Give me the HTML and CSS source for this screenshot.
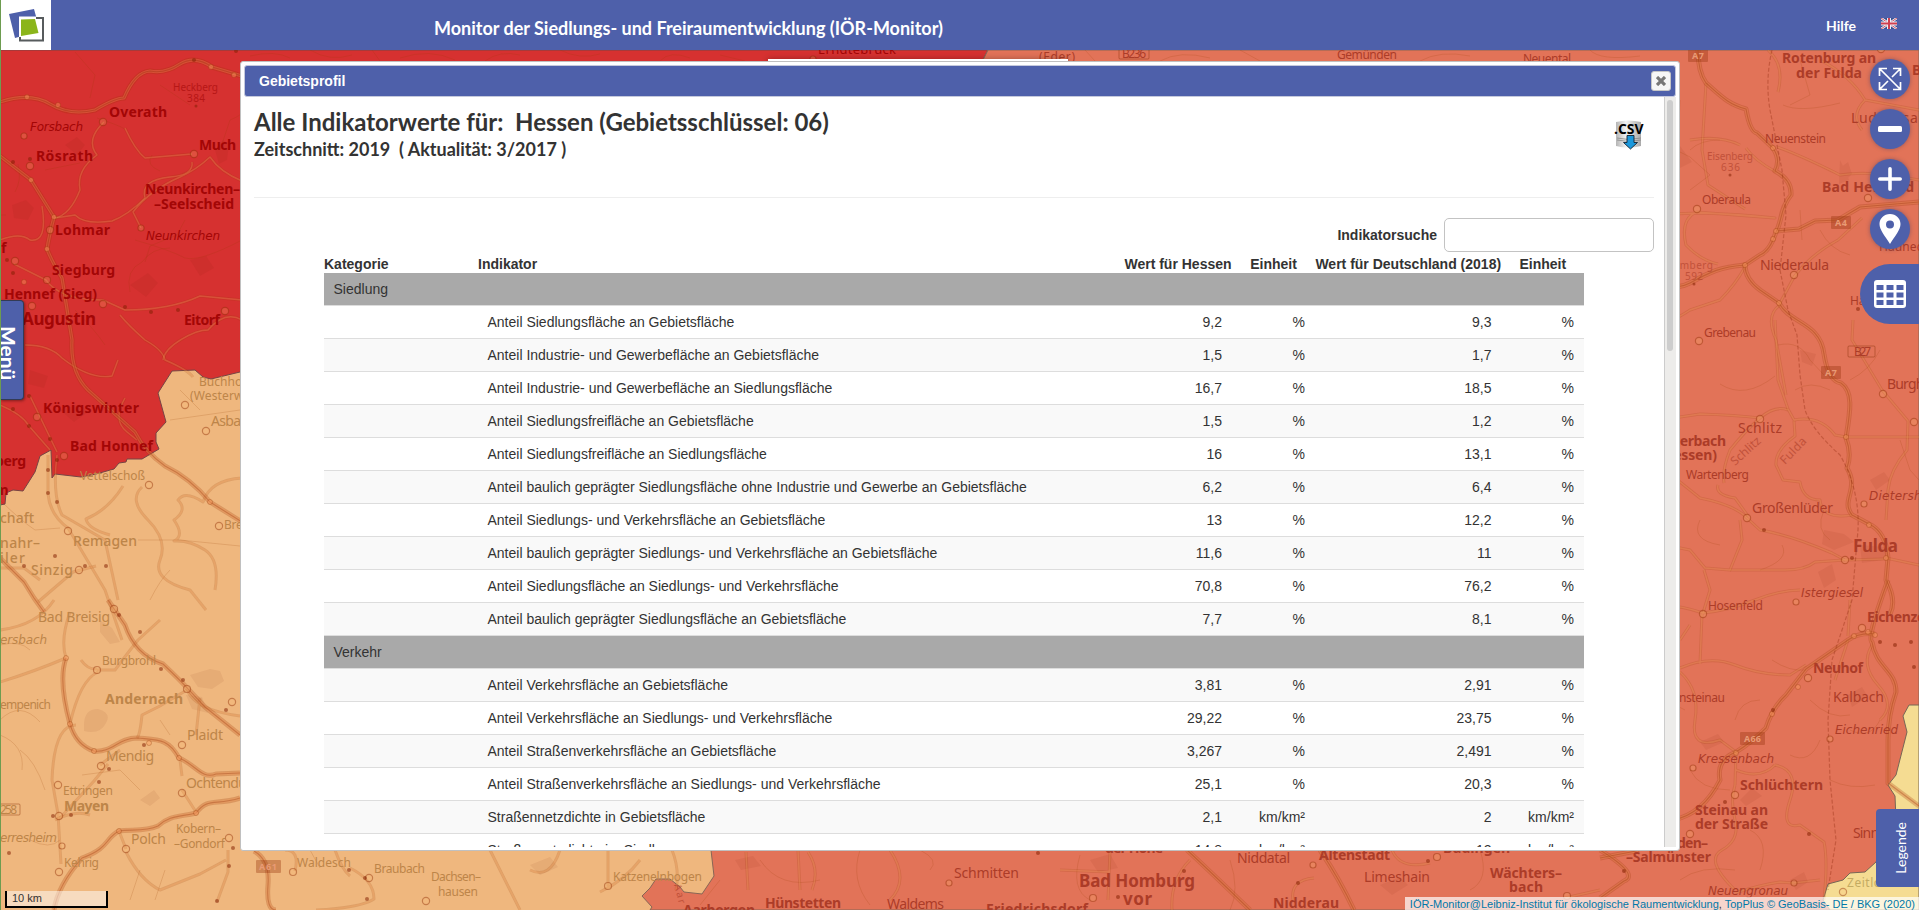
FILE: index.html
```html
<!DOCTYPE html>
<html lang="de">
<head>
<meta charset="utf-8">
<title>IÖR-Monitor</title>
<link rel="stylesheet" href="styles.css">
</head>
<body>
<div class="app">
<svg class="map" viewBox="0 0 1919 910" width="1919" height="910" aria-hidden="true">
  <defs>
    <g id="motorways">
      <path d="M0 102 Q30 92 50 104 T95 110 Q115 98 124 98 Q135 72 150 71 Q165 74 180 64 Q195 55 212 67 L242 76"/>
      <path d="M0 156 L31 180 L54 217 Q49 236 47 249 Q52 262 62 278 L72 340 Q70 372 88 390 L135 432 Q145 452 165 466 Q190 478 210 502 L242 522"/>
      <path d="M0 558 L24 582 L34 598 L44 612"/>
      <path d="M108 600 L125 625 Q135 655 163 664 Q180 680 190 691 L205 707 L240 735"/>
      <path d="M66 658 Q58 680 70 724 Q76 745 94 751 C112 753 118 738 137 738 C158 740 168 738 179 758 C195 764 202 780 216 774 L240 773"/>
      <path d="M240 798 C215 806 208 797 196 813 C180 817 170 815 158 826 C145 832 130 829 119 831 C105 838 110 848 82 858 Q58 885 54 910"/>
      <path d="M254 851 Q270 860 268 885 T276 910"/>
      <path d="M1698 50 Q1698 72 1706 83 C1722 97 1728 104 1746 109 Q1750 132 1757 133 L1773 148 Q1781 160 1775 171 Q1792 180 1791 195 C1780 208 1782 222 1776 232 Q1770 251 1760 255 L1745 265 Q1745 279 1760 290 L1779 303 C1790 324 1820 322 1824 354 Q1828 381 1841 383 C1854 392 1850 412 1846 438 Q1852 454 1847 468 C1860 490 1840 500 1852 515 L1869 524 Q1886 532 1888 558 L1886 580 Q1897 600 1890 614"/>
      <path d="M1776 231 L1799 229 L1815 221 L1838 220 L1860 207 L1919 202"/>
      <path d="M1640 288 C1660 285 1675 291 1690 283 C1710 272 1720 267 1745 265"/>
      <path d="M1600 858 L1636 851 L1673 820 Q1703 814 1720 780 Q1716 760 1736 752 Q1752 742 1766 728 Q1772 708 1786 695 L1806 669 L1848 640 Q1860 632 1875 634"/>
      <path d="M1888 580 Q1866 640 1872 642 C1876 668 1896 670 1896 692 Q1888 715 1888 740 L1888 783 L1919 806"/>
      <path d="M1600 850 Q1640 875 1624 881 L1600 898"/>
      <path d="M1320 850 Q1340 880 1354 910"/>
      <path d="M1187 850 Q1215 876 1250 910"/>
    </g>
    <g id="roads">
      <path d="M104 122 Q85 140 97 155 Q76 170 80 190 Q70 215 55 218"/>
      <path d="M125 128 Q135 150 145 158 Q180 155 192 154 M192 162 Q194 175 170 177 Q140 180 145 198 Q128 215 112 221 Q85 225 75 215 L55 218"/>
      <path d="M141 228 L133 212 Q150 190 180 177 Q196 170 210 157 Q220 172 242 181"/>
      <path d="M0 240 Q20 232 30 240 Q48 243 42 206"/>
      <path d="M14 264 L46 280 Q60 300 103 300 L125 310 Q170 310 200 296 L242 300"/>
      <path d="M120 315 Q128 325 145 340 Q163 350 165 360 Q188 370 193 377"/>
      <path d="M163 360 C165 345 195 330 208 330 Q225 310 242 320"/>
      <path d="M25 345 Q50 345 62 358 Q90 380 112 376 L118 360"/>
      <path d="M0 405 Q22 414 29 426 L50 450 M30 396 L57 452 M125 398 Q112 420 127 432 L137 440"/>
      <path d="M48 455 L48 494 Q50 515 68 528 L80 548 L105 590 L122 640 M57 455 Q52 495 62 515 L105 540 L118 600"/>
      <path d="M123 486 Q108 510 86 519 Q88 529 110 535"/>
      <path d="M142 487 Q128 500 148 520 T160 560 T190 590 L206 610"/>
      <path d="M242 478 Q210 480 203 502 Q185 490 178 500 Q188 510 174 520 Q185 536 174 541 Q190 540 205 550 T215 590"/>
      <path d="M38 602 L73 572 L96 566 M0 568 H24 L40 580"/>
      <path d="M0 630 Q38 625 54 600 M66 658 Q60 640 70 612 M66 658 Q33 672 0 682 M97 669 Q88 670 81 660"/>
      <path d="M97 670 H115 Q130 650 138 640 L160 620 M98 672 Q80 680 70 724"/>
      <path d="M187 690 Q170 700 160 706 L142 715 Q140 735 137 738 M200 698 L196 735 M187 690 Q195 710 240 716"/>
      <path d="M76 725 Q54 725 52 780 L58 814 L61 864 M108 764 L94 781 L60 818 M100 765 L120 750"/>
      <path d="M55 820 Q75 810 90 815 M119 831 L126 849 M182 790 L196 812 M182 776 L180 760"/>
      <path d="M228 850 L228 872 L217 902 M126 852 Q140 880 160 890 L200 874 L226 860"/>
      <path d="M335 850 Q342 870 350 876 M350 868 Q374 880 374 899 Q360 908 316 910 M295 871 Q300 850 285 850"/>
      <path d="M490 850 L510 890 L520 910 M530 870 Q550 880 560 850 M600 892 Q625 880 640 860 M608 850 L608 886"/>
      <path d="M672 850 Q680 870 676 890 M746 852 L748 890 M798 850 L800 890 M808 852 Q820 870 812 890 M890 850 Q910 880 890 900"/>
      <path d="M1060 870 L1110 872 M1110 852 L1108 900 M1190 860 Q1170 880 1172 910 M1314 878 Q1290 880 1293 900 M1565 898 L1600 890 M1430 863 Q1400 870 1392 850"/>
      <path d="M1746 148 Q1754 160 1776 172 M1740 145 Q1720 135 1690 140 M1777 147 Q1800 155 1840 175 Q1870 170 1919 180"/>
      <path d="M1778 92 Q1785 65 1768 50 M1706 83 L1702 150 L1708 185 L1745 209"/>
      <path d="M1696 212 L1775 218 Q1740 214 1700 213 L1640 215 M1696 212 Q1680 220 1686 245 Q1700 260 1718 264"/>
      <path d="M1745 267 Q1735 285 1720 300 L1690 310 Q1660 330 1640 326"/>
      <path d="M1794 277 Q1810 255 1838 240 L1862 218 M1794 277 L1780 303 M1780 305 Q1765 315 1776 340 L1786 395"/>
      <path d="M1820 60 Q1850 75 1865 100 L1919 110 M1865 100 Q1850 115 1862 130"/>
      <path d="M1853 320 L1852 340 L1882 390 L1908 421 L1907 450 Q1890 470 1888 490 L1886 520"/>
      <path d="M1775 320 L1778 380 L1788 409 L1794 420 Q1820 415 1835 435 L1846 437 H1919"/>
      <path d="M1760 418 Q1735 415 1700 414 L1680 417 L1640 440 M1788 410 Q1775 405 1760 418 T1730 450 Q1722 470 1724 483"/>
      <path d="M1794 421 L1795 436 Q1775 450 1776 465 L1783 480 L1800 482 Q1803 500 1820 500 Q1822 520 1852 515"/>
      <path d="M1640 450 L1700 498 Q1735 505 1747 518 L1760 530 Q1790 535 1832 553 L1845 560 L1885 559"/>
      <path d="M1718 485 Q1715 495 1735 498 L1748 516 M1740 520 L1742 540 L1730 570 L1705 568 L1690 550 L1640 540"/>
      <path d="M1730 570 L1785 570 Q1805 570 1815 562 L1845 560 M1704 570 L1710 590 L1703 613"/>
      <path d="M1703 613 Q1730 610 1755 600 T1800 590 M1703 613 Q1665 600 1640 610 M1886 558 L1919 565"/>
      <path d="M1702 614 L1700 664 M1680 668 Q1710 655 1735 665 T1790 675 L1806 665"/>
      <path d="M1680 672 Q1700 690 1695 720 T1720 740 L1736 752 M1680 640 L1690 625"/>
      <path d="M1736 752 L1735 785 M1736 770 Q1760 780 1775 765 M1735 785 Q1730 800 1735 820 T1722 850 T1735 890"/>
      <path d="M1775 765 Q1800 770 1790 800 T1800 825 L1824 842 Q1828 860 1824 900"/>
      <path d="M1848 640 L1835 680 M1872 645 Q1860 665 1878 685 T1880 720 M1848 636 L1850 600"/>
      <path d="M1735 893 Q1760 885 1780 882 L1793 883 L1820 880"/>
    </g>
    <g id="tracks">
      <path d="M15 192 Q22 180 18 164 M45 170 L80 163 M97 118 Q118 125 125 129 M152 155 Q145 165 160 171 M185 220 L177 235 L150 246 L145 262 M220 150 L230 120 Q242 115 242 112 M75 52 L95 75 L90 98 M160 85 L190 105 M135 240 Q170 250 185 258 Q200 262 242 240"/>
      <path d="M250 56 Q275 50 290 58 M310 50 Q330 62 352 55 M372 50 L380 61 M400 58 Q430 48 455 60 M485 61 Q500 50 520 55 M560 50 Q580 60 600 54 M660 61 Q670 50 690 58 M720 55 L745 61 M1085 50 L1095 61 M1160 61 Q1180 50 1210 58 M1240 50 L1260 61 M1420 61 Q1440 50 1470 56 M1590 50 Q1600 61 1640 56"/>
      <path d="M130 292 Q125 270 142 262 Q152 248 170 248 M75 310 Q95 330 105 345 M0 215 H6 M180 390 Q190 400 200 410 M170 420 L240 410 M0 500 Q20 520 35 530 L60 528 M0 645 Q20 640 30 650 M0 720 Q20 700 40 722 M20 750 Q35 760 45 790 M82 775 L120 770 L140 790 M160 720 L170 735"/>
      <path d="M138 540 H180 L240 546 M150 600 Q160 580 170 570 M0 735 Q25 745 22 770 M30 840 Q50 850 60 840 M155 900 L165 870 M140 870 L130 900 M310 850 L320 868"/>
      <path d="M1650 80 L1680 100 L1678 150 M1690 150 Q1700 140 1720 140 M1783 105 Q1800 113 1840 103 M1640 155 L1670 147 L1690 157 L1710 175 L1690 190 M1680 185 L1640 205 M1800 60 L1810 95 L1790 105 M1640 230 Q1660 240 1680 225 M1800 210 L1802 240 M1820 230 Q1830 250 1850 255"/>
      <path d="M1720 384 Q1745 400 1775 376 M1778 345 Q1800 340 1810 360 L1824 375 M1640 400 Q1670 410 1680 430 M1795 390 Q1810 380 1830 390 M1850 380 Q1870 370 1880 350 M1700 520 Q1690 540 1720 545 M1640 590 Q1660 570 1680 580 M1782 545 Q1790 560 1760 570 M1824 510 Q1815 530 1830 540 M1900 440 L1910 470 L1919 480"/>
      <path d="M1772 660 Q1790 672 1806 670 M1640 700 Q1660 695 1685 710 M1760 700 Q1740 700 1735 720 M1810 700 Q1830 720 1850 715 M1790 755 Q1810 765 1820 740 M1850 730 Q1870 740 1880 720 M1690 770 Q1700 790 1730 790 M1750 830 Q1770 840 1760 870 M1830 780 Q1850 790 1875 785 M1680 880 Q1700 865 1735 870"/>
      <path d="M700 905 L720 880 M760 860 Q780 890 820 880 M860 850 Q850 880 870 905 M930 870 Q940 860 920 850 M1080 855 Q1070 890 1090 900 M1230 860 Q1240 890 1230 910 M1480 850 Q1490 880 1470 890"/>
    </g>
    <path id="patches" d="M215 150 l8 -10 6 4 -2 16 -8 4z M130 285 l18 -12 10 10 -12 14z M65 145 l12 -8 8 8 -8 10z M190 260 l16 -4 8 12 -14 8z M12 205 l14 -5 8 8 -6 12 -14 -2z M60 410 l20 -6 8 8 -14 10z M30 370 l18 6 -4 12 -16 -4z M190 675 l20 -6 10 2 4 10 -12 8 -14 -2z M186 695 l16 2 6 16 -16 -4z M140 800 l14 -10 6 8 -10 8z M84 725 q0 -16 14 -16 q14 4 8 14 q-6 12 -22 8z M100 620 l12 8 8 14 -10 2 -10 -12z M1840 168 l8 -6 4 12 -8 8z M1650 150 l30 -4 12 16 -20 10 -24 -6z M1824 530 l20 4 10 8 -20 8 -12 -6z M1860 545 l24 2 6 12 -28 4z M1818 572 l14 -8 4 16 -12 8z M1870 480 l14 -8 6 8 -14 10z M1800 350 l16 4 -4 12 -10 -4z M1848 695 l14 -8 6 10 -16 10z M1700 742 l18 -8 6 8 -18 8z M1740 800 l12 -12 10 8 -16 10z M1790 880 l14 -8 4 10 -12 8z M1840 160 l5 10 4 10 -10 4z M735 860 l18 -4 8 10 -20 4z M1380 885 l20 -8 8 8 -16 10z M530 865 l20 -8 8 10 -18 8z M1090 860 l20 -6 8 14 -20 4z"/>
    <path id="redArea" d="M0 50H988L978 70L500 300L240 372L211 379 203 377 195 370 172 371 158 393 166 422 156 433 156 442 159 449 142 459 127 459 126 462 119 463 114 469 96 474 81 477 55 474 52 478 51 450 40 456 35 472 23 491 13 490 6 493 5 504 0 505Z"/>
    <path id="coralArea" d="M988 50H1919V910H650L652 907 642 896 650 888 656 879 670 879 680 887 684 892 702 894 714 876 711 850 700 500 978 70Z"/>
  </defs>
  <rect class="land-tan" width="1919" height="910"/>
  <use href="#redArea" class="land-red"/>
  <use href="#coralArea" class="land-coral"/>
  <path class="land-yellow" d="M1919 705H1909L1903 716 1907 732 1896 775 1888 785 1895 796 1896 820 1876 862 1865 872 1850 873 1843 880 1828 884 1823 900 1830 910H1919Z"/>
  <use href="#patches" class="patches"/>
  <use href="#tracks" class="tracks"/>
  <use href="#roads" class="roads-casing"/><use href="#roads" class="roads-core"/>
  <use href="#motorways" class="mw-casing"/><use href="#motorways" class="mw-core"/><use href="#motorways" class="mw-mid"/>
  <path class="rail" d="M1772 50 Q1765 80 1770 110 L1782 170 L1786 215 L1780 270 L1788 310 L1797 335 L1800 375 L1805 410 Q1812 430 1840 455 Q1860 490 1858 530 L1852 600 L1832 660 L1828 720 L1830 780 L1836 840 L1828 890"/>

  <g class="junctions">
    <circle cx="27" cy="97" r="2.5"/><circle cx="58" cy="105" r="2.5"/><circle cx="31" cy="180" r="2.5"/><circle cx="54" cy="217" r="2.5"/><circle cx="47" cy="249" r="2.5"/><circle cx="24" cy="282" r="2.5"/><circle cx="211" cy="67" r="2.5"/><circle cx="234" cy="75" r="2.5"/><circle cx="210" cy="502" r="2.5"/><circle cx="66" cy="658" r="2.5"/><circle cx="70" cy="724" r="2.5"/><circle cx="94" cy="751" r="2.5"/><circle cx="149" cy="743" r="2.5"/><circle cx="179" cy="758" r="2.5"/><circle cx="196" cy="813" r="2.5"/><circle cx="119" cy="831" r="2.5"/><circle cx="33" cy="899" r="2.5"/><circle cx="1773" cy="148" r="2.5"/><circle cx="1776" cy="231" r="2.5"/><circle cx="1773" cy="239" r="2.5"/><circle cx="1745" cy="265" r="2.5"/><circle cx="1779" cy="303" r="2.5"/><circle cx="1846" cy="437" r="2.5"/><circle cx="1869" cy="525" r="2.5"/><circle cx="1886" cy="558" r="2.5"/><circle cx="1736" cy="753" r="2.5"/><circle cx="1772" cy="714" r="2.5"/><circle cx="1798" cy="687" r="2.5"/><circle cx="1854" cy="636" r="2.5"/><circle cx="1868" cy="632" r="2.5"/><circle cx="1875" cy="635" r="2.5"/>
  </g>
  <g class="places">
    <circle cx="103" cy="122" r="3.600"/><circle cx="24" cy="136" r="3"/><circle cx="30" cy="166" r="3.600"/><circle cx="194" cy="154" r="3.600"/><circle cx="50" cy="230" r="3.600"/><circle cx="141" cy="228" r="3"/><circle cx="15" cy="261" r="3.600"/><circle cx="47" cy="280" r="3.500"/><circle cx="32" cy="306" r="3.600"/><circle cx="103" cy="304" r="3.600"/><circle cx="225" cy="311" r="3.600"/><circle cx="37" cy="417" r="3.600"/><circle cx="64" cy="456" r="3.600"/><circle cx="185" cy="405" r="3.600"/><circle cx="206" cy="431" r="3.600"/><circle cx="149" cy="485" r="3.600"/><circle cx="68" cy="531" r="3.600"/><circle cx="219" cy="526" r="3.600"/><circle cx="79" cy="570" r="3.600"/><circle cx="114" cy="609" r="3.600"/><circle cx="97" cy="670" r="3.500"/><circle cx="187" cy="689" r="3.500"/><circle cx="232" cy="702" r="3.600"/><circle cx="182" cy="745" r="3.600"/><circle cx="101" cy="766" r="3.600"/><circle cx="58" cy="785" r="3.600"/><circle cx="182" cy="793" r="3.600"/><circle cx="59" cy="816" r="3.600"/><circle cx="62" cy="846" r="3"/><circle cx="126" cy="849" r="3.600"/><circle cx="59" cy="872" r="3.600"/><circle cx="229" cy="838" r="3.600"/><circle cx="293" cy="872" r="3.500"/><circle cx="369" cy="878" r="3.600"/><circle cx="426" cy="901" r="3.600"/><circle cx="608" cy="886" r="3.500"/><circle cx="813" cy="59" r="3"/><circle cx="949" cy="883" r="3"/><circle cx="1093" cy="898" r="3.500"/><circle cx="1313" cy="865" r="3"/><circle cx="1437" cy="857" r="3.500"/><circle cx="1567" cy="896" r="3.500"/>
    <circle cx="1881" cy="49" r="3.600"/><circle cx="1697" cy="209" r="3.600"/><circle cx="1868" cy="198" r="3.600"/><circle cx="1794" cy="275" r="3.600"/><circle cx="1699" cy="341" r="3.600"/><circle cx="1883" cy="394" r="3.600"/><circle cx="1914" cy="422" r="3.600"/><circle cx="1760" cy="419" r="3.600"/><circle cx="1747" cy="518" r="3.600"/><circle cx="1864" cy="504" r="3"/><circle cx="1845" cy="560" r="3.600"/><circle cx="1796" cy="602" r="3"/><circle cx="1703" cy="614" r="3.600"/><circle cx="1862" cy="628" r="3.600"/><circle cx="1808" cy="678" r="3.600"/><circle cx="1830" cy="739" r="3"/><circle cx="1693" cy="768" r="3"/><circle cx="1735" cy="795" r="3.600"/><circle cx="1690" cy="834" r="3.600"/><circle cx="1794" cy="883" r="3"/><circle cx="1843" cy="892" r="3.600"/>
  </g>
  <g class="dots">
    <circle cx="194" cy="60" r="2"/><circle cx="236" cy="51" r="2"/><circle cx="196" cy="106" r="1.5"/><circle cx="13" cy="162" r="2"/><circle cx="30" cy="159" r="2"/><circle cx="7" cy="260" r="2"/><circle cx="13" cy="273" r="2"/><circle cx="125" cy="307" r="2"/><circle cx="151" cy="312" r="2"/><circle cx="178" cy="310" r="2"/><circle cx="29" cy="396" r="2"/><circle cx="13" cy="409" r="2"/><circle cx="29" cy="426" r="2"/><circle cx="50" cy="439" r="2"/><circle cx="57" cy="460" r="2"/><circle cx="48" cy="470" r="2"/><circle cx="48" cy="493" r="2"/><circle cx="57" cy="502" r="2"/><circle cx="55" cy="556" r="2"/><circle cx="24" cy="566" r="2"/><circle cx="85" cy="566" r="2"/><circle cx="106" cy="566" r="2"/><circle cx="119" cy="615" r="2"/><circle cx="140" cy="632" r="2"/><circle cx="161" cy="669" r="2"/><circle cx="183" cy="680" r="2"/><circle cx="226" cy="710" r="2"/><circle cx="144" cy="745" r="2"/><circle cx="109" cy="769" r="2"/><circle cx="99" cy="782" r="2"/><circle cx="53" cy="816" r="2"/><circle cx="71" cy="815" r="2"/><circle cx="9" cy="853" r="2"/><circle cx="233" cy="848" r="2"/><circle cx="229" cy="866" r="2"/><circle cx="217" cy="901" r="2"/><circle cx="349" cy="870" r="2"/><circle cx="365" cy="878" r="2"/><circle cx="367" cy="899" r="2"/><circle cx="1038" cy="853" r="2"/><circle cx="1118" cy="897" r="2"/><circle cx="1184" cy="871" r="2"/><circle cx="1298" cy="883" r="2"/><circle cx="1428" cy="861" r="2"/><circle cx="1624" cy="871" r="2"/><circle cx="1730" cy="175" r="1.5"/><circle cx="1694" cy="284" r="1.5"/><circle cx="1858" cy="309" r="2"/><circle cx="1764" cy="530" r="2"/><circle cx="1852" cy="558" r="2"/><circle cx="1880" cy="642" r="2"/><circle cx="1895" cy="645" r="2"/><circle cx="1911" cy="642" r="2"/><circle cx="1914" cy="667" r="2"/><circle cx="1773" cy="710" r="2"/><circle cx="1725" cy="802" r="2"/><circle cx="1809" cy="834" r="2"/>
  </g>
  <g class="shields">
    <rect x="256" y="860" width="25" height="13" rx="1"/><rect x="1688" y="49" width="20" height="13" rx="1"/><rect x="1831" y="216" width="20" height="13" rx="1"/><rect x="1821" y="366" width="20" height="13" rx="1"/><rect x="1740" y="732" width="25" height="13" rx="1"/>
  </g>
  <g class="plates"><rect x="-8" y="804" width="28" height="11" rx="1"/><rect x="1848" y="346" width="27" height="11" rx="1"/><rect x="1119" y="48" width="30" height="11" rx="1"/></g>

  <g class="lbl red">
    <g class="b">
      <text x="109" y="117" textLength="58">Overath</text><text x="36" y="161" textLength="57">Rösrath</text><text x="199" y="150" textLength="37">Much</text><text x="145" y="194" textLength="95">Neunkirchen–</text><text x="154" y="209" textLength="80">–Seelscheid</text><text x="55" y="235" textLength="55">Lohmar</text><text x="52" y="275" textLength="63">Siegburg</text><text x="4" y="299" textLength="93">Hennef (Sieg)</text><text x="184" y="325" textLength="36">Eitorf</text><text x="43" y="413" textLength="96">Königswinter</text><text x="70" y="451" textLength="83">Bad Honnef</text><text x="-5" y="466" textLength="31">berg</text><text x="-5" y="495">m</text><text x="1" y="253">f</text>
      <text class="lg" x="22" y="325" textLength="74">Augustin</text>
    </g>
    <g class="i"><text x="30" y="131" textLength="53">Forsbach</text><text x="146" y="240" textLength="74">Neunkirchen</text></g>
    <g class="r"><text class="faint" x="173" y="91" textLength="45">Heckberg</text><text class="faint" x="187" y="102" textLength="18">384</text><text class="md" x="818" y="54" textLength="78">Erndtebrück</text></g>
  </g>
  <g class="lbl tan">
    <g class="r">
      <text class="sm" x="199" y="386" textLength="52">Buchholz</text><text class="sm" x="190" y="400" textLength="60">(Westerw.)</text><text x="211" y="426" textLength="44">Asbach</text><text class="sm" x="80" y="480" textLength="65">Vettelschoß</text><text class="sm" x="224" y="529" textLength="44">Breitsch</text><text class="b2" x="0" y="523" textLength="34">chaft</text><text class="b2" x="0" y="548" textLength="40">nahr–</text><text class="b2" x="0" y="563" textLength="25">iler</text><text class="b2" x="73" y="546" textLength="64">Remagen</text><text class="b2" x="31" y="575" textLength="42">Sinzig</text><text x="38" y="622" textLength="72">Bad Breisig</text><text class="sm" x="102" y="665" textLength="54">Burgbrohl</text><text class="sm" x="0" y="709" textLength="51">empenich</text><text x="187" y="740" textLength="36">Plaidt</text><text x="106" y="761" textLength="48">Mendig</text><text x="186" y="788" textLength="77">Ochtendung</text><text class="sm" x="63" y="795" textLength="50">Ettringen</text><text class="sm" x="0" y="814" textLength="17">258</text><text class="sm" x="176" y="833" textLength="45">Kobern–</text><text class="sm" x="174" y="848" textLength="51">–Gondorf</text><text x="131" y="844" textLength="35">Polch</text><text class="sm" x="64" y="867" textLength="35">Kehrig</text><text class="sm" x="297" y="867" textLength="54">Waldesch</text><text class="sm" x="374" y="873" textLength="51">Braubach</text><text class="sm" x="431" y="881" textLength="50">Dachsen–</text><text class="sm" x="438" y="896" textLength="40">hausen</text><text class="sm" x="613" y="881" textLength="89">Katzenelnbogen</text>
    </g>
    <g class="b"><text x="105" y="704" textLength="78">Andernach</text><text x="64" y="811" textLength="45">Mayen</text></g>
    <g class="i"><text x="0" y="644" textLength="47">ersbach</text><text x="0" y="842" textLength="57">erresheim</text></g>
  </g>
  <g class="lbl coral">
    <g class="b">
      <text x="1782" y="63" textLength="94">Rotenburg an</text><text x="1796" y="78" textLength="66">der Fulda</text><text x="1912" y="75">B</text><text x="1822" y="192" textLength="92">Bad Hersfeld</text><text x="1650" y="446" textLength="76">Lauterbach</text><text x="1658" y="460" textLength="59">(Hessen)</text><text x="1867" y="622" textLength="66">Eichenzell</text><text x="1813" y="673" textLength="50">Neuhof</text><text x="1740" y="790" textLength="83">Schlüchtern</text><text x="1695" y="815" textLength="73">Steinau an</text><text x="1695" y="829" textLength="73">der Straße</text><text x="1662" y="848" textLength="46">Soden–</text><text x="1626" y="862" textLength="85">–Salmünster</text>
      <text x="1105" y="853" textLength="58">der Höhe</text><text x="1319" y="860" textLength="71">Altenstadt</text><text x="1443" y="853" textLength="67">Büdingen</text><text x="1490" y="878" textLength="72">Wächters–</text><text x="1509" y="892" textLength="34">bach</text><text x="765" y="908" textLength="76">Hünstetten</text><text x="986" y="914" textLength="102">Friedrichsdorf</text><text x="1273" y="908" textLength="66">Nidderau</text><text x="683" y="915" textLength="72">Aarbergen</text>
      <text class="lg" x="1853" y="552" textLength="45">Fulda</text><text class="lg" x="1079" y="887" textLength="116">Bad Homburg</text><text class="lg" x="1123" y="905" textLength="29">vor</text>
    </g>
    <g class="r">
      <text class="sm" x="1765" y="143" textLength="61">Neuenstein</text><text x="1851" y="123" textLength="76">Ludwigsau</text><text class="faint" x="1707" y="160" textLength="46">Eisenberg</text><text class="faint" x="1721" y="171" textLength="19">636</text><text class="sm" x="1702" y="204" textLength="49">Oberaula</text><text class="sm" x="1879" y="251" textLength="50">Hauneck</text><text class="faint" x="1670" y="269" textLength="43">Rimberg</text><text class="faint" x="1685" y="280" textLength="18">592</text><text x="1760" y="270" textLength="69">Niederaula</text><text class="sm" x="1850" y="305" textLength="50">Haunetal</text><text class="sm" x="1704" y="337" textLength="52">Grebenau</text><text x="1887" y="389" textLength="60">Burghaun</text><text x="1738" y="433" textLength="44">Schlitz</text><text class="sm" x="1686" y="479" textLength="63">Wartenberg</text><text x="1752" y="513" textLength="81">Großenlüder</text><text class="sm" x="1708" y="610" textLength="55">Hosenfeld</text><text x="1833" y="702" textLength="51">Kalbach</text><text class="sm" x="1679" y="702" textLength="46">nsteinau</text><text x="1853" y="838" textLength="40">Sinntal</text><text class="sm" x="1337" y="59" textLength="60">Gemünden</text><text class="sm" x="1523" y="63" textLength="48">Neuental</text><text class="sm" x="1039" y="61" textLength="36">(Eder)</text><text class="sm" x="1122" y="58" textLength="24">B236</text><text class="sm" x="1854" y="356" textLength="17">B27</text>
      <text x="954" y="878" textLength="65">Schmitten</text><text x="887" y="909" textLength="57">Waldems</text><text x="1237" y="863" textLength="53">Niddatal</text><text x="1364" y="882" textLength="66">Limeshain</text>
      <text class="faint md" transform="translate(1735 466) rotate(-42)" textLength="36">Schlitz</text><text class="faint md" transform="translate(1785 465) rotate(-46)" textLength="32">Fulda</text><text class="faint" transform="translate(674 885) rotate(75)" textLength="20">Aar</text>
    </g>
    <g class="i"><text x="1869" y="500" textLength="68">Dietershan</text><text x="1801" y="597" textLength="62">Istergiesel</text><text x="1835" y="734" textLength="63">Eichenried</text><text x="1698" y="763" textLength="76">Kressenbach</text><text x="1708" y="895" textLength="80">Neuengronau</text></g>
  </g>
  <text class="yellow-lbl" x="1847" y="887" textLength="45">Zeitlofs</text>
  <g class="shield-txt"><text x="259" y="870" textLength="18">A61</text><text x="1692" y="59" textLength="12">A7</text><text x="1835" y="226" textLength="12">A4</text><text x="1825" y="376" textLength="12">A7</text><text x="1744" y="742" textLength="17">A66</text></g>
</svg>

<header class="topbar">
  <a class="logo"><svg viewBox="0 0 50 50" width="50" height="50"><path fill="#4e60aa" d="M8 14L33 9 39 31 14 38Z"/><path fill="#fff" d="M18 17H43V41H18Z"/><path fill="none" stroke="#575b5d" stroke-width="2" d="M34 18H42V40.5H19V37"/><path fill="#fff" d="M18 16.500h17v20H18Z"/><path fill="#8bb51b" d="M20 19.500L34 19 37.500 33 20 36Z"/></svg></a>
  <h1 class="site-title">Monitor der Siedlungs- und Freiraumentwicklung (IÖR-Monitor)</h1>
  <nav class="topnav"><a class="help">Hilfe</a>
    <svg class="flag" viewBox="0 0 16 11" width="16" height="11"><path fill="#34508f" d="M0 0H16V11H0z"/><path stroke="#fff" stroke-width="2.400" d="M0 0L16 11M16 0L0 11"/><path stroke="#d8404a" stroke-width=".9" d="M0 0L16 11M16 0L0 11"/><path stroke="#fff" stroke-width="4" d="M8 0V11M0 5.500H16"/><path stroke="#df3c46" stroke-width="2" d="M8 0V11M0 5.500H16"/></svg>
  </nav>
</header>

<div class="searchbar"></div>
<div class="menu-tab"><span>Menü</span></div>

<div class="tools">
  <button class="tool"><svg viewBox="0 0 24 24" width="24" height="24" fill="none" stroke="#fff" stroke-width="1.700"><path d="M1.500 9V1.500H9M15 1.500h7.500V9M22.500 15v7.500H15M9 22.500H1.500V15M2 2L22 22M22 2L14 10M10 14L2 22"/></svg></button>
  <button class="tool"><svg viewBox="0 0 24 24" width="24" height="24"><rect y="9" width="24" height="6" rx="1.500" fill="#fff"/></svg></button>
  <button class="tool"><svg viewBox="0 0 24 24" width="24" height="24"><path fill="none" stroke="#fff" stroke-width="3.600" stroke-linecap="round" d="M12 1.800V22.200M1.800 12H22.200"/></svg></button>
  <button class="tool"><svg viewBox="0 0 24 30" width="24" height="30"><path fill="#fff" fill-rule="evenodd" d="M12 0C18 0 22.500 4.500 22.500 10C22.500 16 17 22 12 30C7 22 1.500 16 1.500 10C1.500 4.500 6 0 12 0ZM12 6.500A4 4 0 1 0 12 14.500A4 4 0 1 0 12 6.500Z"/></svg></button>
  <button class="tool-table"><svg viewBox="0 0 32 28" width="32" height="28"><rect width="32" height="28" rx="3" fill="#fff"/><path fill="#4e60aa" d="M2.500 5h7v5h-7zM12.500 5h7v5h-7zM22.500 5h7v5h-7zM2.500 12.500h7v5h-7zM12.500 12.500h7v5h-7zM22.500 12.500h7v5h-7zM2.500 20h7v5h-7zM12.500 20h7v5h-7zM22.500 20h7v5h-7z"/></svg></button>
</div>
<div class="legend-tab"><span>Legende</span></div>
<div class="scale">10 km</div>
<div class="attribution">IÖR-Monitor@Leibniz-Institut für ökologische Raumentwicklung<i>,</i> TopPlus © GeoBasis- DE / BKG (2020)</div>

<section class="dialog">
  <div class="dialog-title"><span>Gebietsprofil</span><button class="close"><svg viewBox="0 0 10 10" width="10" height="10"><path stroke="#777" stroke-width="3.200" d="M1 1L9 9M9 1L1 9"/></svg></button></div>
  <div class="dialog-body">
    <div class="content">
      <div class="head">
        <div><h2>Alle Indikatorwerte für:&nbsp; Hessen (Gebietsschlüssel: 06)</h2><h3>Zeitschnitt: 2019&nbsp; ( Aktualität: 3/2017 )</h3></div>
        <svg class="csv" viewBox="0 0 30 30" width="30" height="30"><defs><linearGradient id="disk"><stop offset="0" stop-color="#b5b5b5"/><stop offset=".4" stop-color="#f2f2f2"/><stop offset="1" stop-color="#aaa"/></linearGradient></defs><path fill="url(#disk)" d="M2 2Q14 -1 27 2V26Q14 29 2 26Z"/><path fill="none" stroke="#888" stroke-width=".8" d="M3 18Q14 21 27 18M3 20Q14 23 27 20"/><text x="0" y="13.800" textLength="29.500" lengthAdjust="spacingAndGlyphs">.CSV</text><path fill="#1b98dc" stroke="#123" stroke-width=".9" d="M13 15.500h7v7h3.500L16.500 29 9.500 22.500H13Z"/></svg>
      </div>
      <label class="search"><span>Indikatorsuche</span><input type="text"></label>
      <table>
        <colgroup><col class="c1"><col class="c2"><col class="c3"><col class="c4"><col class="c5"><col class="c6"></colgroup>
        <thead><tr><th>Kategorie</th><th>Indikator</th><th>Wert für Hessen</th><th>Einheit</th><th>Wert für Deutschland (2018)</th><th>Einheit</th></tr></thead>
        <tbody>
        <tr class="cat"><td colspan="6">Siedlung</td></tr>
        <tr><td></td><td>Anteil Siedlungsfläche an Gebietsfläche</td><td>9,2</td><td>%</td><td>9,3</td><td>%</td></tr>
        <tr><td></td><td>Anteil Industrie- und Gewerbefläche an Gebietsfläche</td><td>1,5</td><td>%</td><td>1,7</td><td>%</td></tr>
        <tr><td></td><td>Anteil Industrie- und Gewerbefläche an Siedlungsfläche</td><td>16,7</td><td>%</td><td>18,5</td><td>%</td></tr>
        <tr><td></td><td>Anteil Siedlungsfreifläche an Gebietsfläche</td><td>1,5</td><td>%</td><td>1,2</td><td>%</td></tr>
        <tr><td></td><td>Anteil Siedlungsfreifläche an Siedlungsfläche</td><td>16</td><td>%</td><td>13,1</td><td>%</td></tr>
        <tr><td></td><td>Anteil baulich geprägter Siedlungsfläche ohne Industrie und Gewerbe an Gebietsfläche</td><td>6,2</td><td>%</td><td>6,4</td><td>%</td></tr>
        <tr><td></td><td>Anteil Siedlungs- und Verkehrsfläche an Gebietsfläche</td><td>13</td><td>%</td><td>12,2</td><td>%</td></tr>
        <tr><td></td><td>Anteil baulich geprägter Siedlungs- und Verkehrsfläche an Gebietsfläche</td><td>11,6</td><td>%</td><td>11</td><td>%</td></tr>
        <tr><td></td><td>Anteil Siedlungsfläche an Siedlungs- und Verkehrsfläche</td><td>70,8</td><td>%</td><td>76,2</td><td>%</td></tr>
        <tr><td></td><td>Anteil baulich geprägter Siedlungsfläche an Gebietsfläche</td><td>7,7</td><td>%</td><td>8,1</td><td>%</td></tr>
        <tr class="cat"><td colspan="6">Verkehr</td></tr>
        <tr><td></td><td>Anteil Verkehrsfläche an Gebietsfläche</td><td>3,81</td><td>%</td><td>2,91</td><td>%</td></tr>
        <tr><td></td><td>Anteil Verkehrsfläche an Siedlungs- und Verkehrsfläche</td><td>29,22</td><td>%</td><td>23,75</td><td>%</td></tr>
        <tr><td></td><td>Anteil Straßenverkehrsfläche an Gebietsfläche</td><td>3,267</td><td>%</td><td>2,491</td><td>%</td></tr>
        <tr><td></td><td>Anteil Straßenverkehrsfläche an Siedlungs- und Verkehrsfläche</td><td>25,1</td><td>%</td><td>20,3</td><td>%</td></tr>
        <tr><td></td><td>Straßennetzdichte in Gebietsfläche</td><td>2,1</td><td>km/km²</td><td>2</td><td>km/km²</td></tr>
        <tr><td></td><td>Straßennetzdichte im Siedlungsraum</td><td>14,8</td><td>km/km²</td><td>12</td><td>km/km²</td></tr>
        </tbody>
      </table>
    </div>
    <div class="scrolltrack"><div class="scrollthumb"></div></div>
  </div>
</section>
</div>
</body>
</html>
```
FILE: styles.css
```css
* { box-sizing: border-box; }
body { margin: 0; font: 14px/20px "Liberation Sans", sans-serif; color: #333; overflow: hidden; }
button { padding: 0; border: 0; font: inherit; }
svg { display: block; }
.app { position: relative; width: 1919px; height: 910px; overflow: hidden; border-left: 1px solid #6d9c50; }
.map { position: absolute; left: -1px; top: 0; clip-path: inset(0 0 0 1px); }

/* Map surface */
.land-tan { fill: #efb77e; }
.land-red { fill: #d63130; stroke: #744; stroke-width: 1; }
.land-coral { fill: #e27358; stroke: #865; stroke-width: 1; }
.land-yellow { fill: #f5dc92; stroke: #765; stroke-width: 1; }
.patches { fill: rgba(110, 30, 0, .07); }
.tracks, .roads-casing, .roads-core, .mw-casing, .mw-core, .mw-mid, .rail { fill: none; stroke-linejoin: round; }
.tracks { stroke: rgba(150, 60, 0, .17); stroke-width: 1; }
.roads-casing { stroke: rgba(150, 60, 0, .18); stroke-width: 3; }
.roads-core { stroke: rgba(255, 170, 110, .26); stroke-width: 1.4; }
.mw-casing { stroke: rgba(150, 50, 0, .24); stroke-width: 5; }
.mw-core { stroke: rgba(255, 160, 100, .28); stroke-width: 3.2; }
.mw-mid { stroke: rgba(140, 40, 0, .3); stroke-width: 1.1; }
.rail { stroke: rgba(130, 30, 0, .3); stroke-width: 1.2; stroke-dasharray: 4 2; }
.junctions circle { fill: rgba(255, 160, 100, .4); stroke: rgba(140, 50, 0, .3); }
.places circle { fill: rgba(255, 190, 120, .22); stroke: rgba(140, 40, 0, .42); stroke-width: 1.2; }
.dots circle { fill: rgba(130, 30, 0, .52); }
.shields rect { fill: rgba(150, 50, 10, .36); }
.plates rect { fill: none; stroke: rgba(130, 40, 0, .4); }
.lbl text { font: 14px "Noto Sans", sans-serif; }
.lbl .b text { font-weight: 700; }
.lbl .r .b2 { font-weight: 500; }
.lbl .b .lg { font-size: 17px; }
.lbl .r .sm { font-size: 12px; }
.lbl .r .md { font-size: 13px; }
.lbl .r .faint { font-size: 10px; opacity: .6; }
.lbl .r .faint.md { font-size: 12px; }
.lbl .i text { font: italic 12px "DejaVu Sans", sans-serif; }
.red { fill: #a30606; }
.tan { fill: #bd8549; }
.coral { fill: #ac3c28; }
.yellow-lbl { font: 12px "Noto Sans", sans-serif; fill: #c4ab62; }
.shield-txt text { font: bold 9px "Noto Sans", sans-serif; fill: #e99a75; }

/* Top bar */
.topbar { position: relative; display: flex; height: 50px; background: #4e60aa; color: #fff; font-family: Lato, sans-serif; }
.logo { width: 50px; height: 50px; background: #fff; }
.site-title { margin: 18px 0 0 383px; font-size: 18px; line-height: 20px; font-weight: 700; white-space: nowrap; }
.topnav { display: flex; margin-left: auto; padding-right: 22px; gap: 25px; align-items: flex-start; }
.help { font-size: 14px; line-height: 20px; font-weight: 700; margin-top: 16px; }
.flag { margin-top: 18px; opacity: .9; }

/* Floating map controls */
.searchbar { position: absolute; left: 767px; top: 59px; width: 300px; height: 30px; background: #fff; box-shadow: 0 0 6px rgba(0, 0, 0, .3); }
.menu-tab { position: absolute; left: -1px; top: 300px; width: 24px; height: 100px; display: flex; align-items: center; background: #4e60aa; border: 1px solid #333b55; border-left: 1px solid #6d9c50; border-radius: 0 4px 4px 0; box-shadow: 1px 1px 3px rgba(0, 0, 0, .4); color: #fff; overflow: hidden; }
.menu-tab span { writing-mode: vertical-rl; font: 700 21px/24px Lato, sans-serif; margin-left: -5px; margin-top: 6px; }
.tools { position: absolute; right: 0; top: 59px; display: flex; flex-direction: column; align-items: flex-end; gap: 10px; }
.tool { width: 40px; height: 40px; margin-right: 9px; border-radius: 50%; background: #4e60aa; display: flex; align-items: center; justify-content: center; box-shadow: 0 0 4px rgba(60, 60, 100, .5); }
.tool-table { width: 59px; height: 60px; margin-top: 5px; padding-left: 14px; border-radius: 30px 0 0 30px; background: #4e60aa; display: flex; align-items: center; }
.legend-tab { position: absolute; right: 0; top: 809px; width: 43px; height: 78px; background: #4e60aa; border-radius: 4px 0 0 4px; color: #fff; display: flex; align-items: center; justify-content: center; }
.legend-tab span { writing-mode: vertical-rl; transform: rotate(180deg); font: 14px/20px Lato, sans-serif; margin-left: 6px; }
.scale { position: absolute; left: 4px; top: 891px; width: 103px; height: 17px; padding: 1px 5px; border: 2px solid #000; border-top: 0; background: rgba(255, 255, 255, .5); font-size: 11px; line-height: 13px; }
.attribution { position: absolute; right: 0; top: 897px; height: 13px; padding: 0 4px 0 5px; background: rgba(255, 255, 255, .7); color: #0078a8; font-size: 11px; line-height: 14px; white-space: nowrap; }
.attribution i { color: #333; font-style: normal; }

/* Dialog */
.dialog { position: absolute; left: 239px; top: 61px; width: 1440px; height: 790px; padding: 4px 3px 3px 4px; background: #fff; border: 1px solid #c0c0c0; border-radius: 3px; }
.dialog-title { display: flex; justify-content: space-between; align-items: center; height: 32px; margin: -1px 0 0 -1px; padding: 0 4px 0 14px; border: 1px solid #c5c9dc; border-radius: 3px; background: #4e60aa; color: #fff; font-weight: bold; }
.close { width: 20px; height: 20px; display: flex; align-items: center; justify-content: center; background: #f6f6f6; border: 1px solid #c5c5c5; border-radius: 3px; }
.dialog-body { display: flex; height: 750px; overflow: hidden; }
.content { flex: 1; height: 750px; padding: 0 10px 0 9px; }
.head { display: flex; justify-content: space-between; height: 101px; border-bottom: 1px solid #eee; }
h2, h3 { margin: 0; font-family: Lato, sans-serif; font-weight: 700; white-space: nowrap; }
h2 { margin-top: 11px; font-size: 24px; line-height: 28px; }
h3 { margin-top: 1px; font-size: 18px; line-height: 24px; }
.csv { margin: 23px 10px 0 0; }
.csv text { font: bold 14px "Open Sans", sans-serif; fill: #000; }
.search { display: flex; height: 34px; margin-top: 20px; justify-content: flex-end; align-items: center; gap: 7px; font-weight: bold; }
.search input { width: 210px; height: 34px; border: 1px solid #c3c3c3; border-radius: 5px; background: #fff; }
table { width: 1260px; margin: 1px 0 0 70px; border-collapse: separate; border-spacing: 0; table-layout: fixed; }
.c1 { width: 154px; } .c2 { width: 646px; } .c3 { width: 108px; }
.c4 { width: 83px; } .c5 { width: 186.5px; } .c6 { width: 82.5px; }
th { height: 20px; padding: 3px 0 0; line-height: 17px; text-align: center; white-space: nowrap; }
th:nth-child(-n+2) { text-align: left; }
td { height: 33px; padding: 0 10px 0 9.5px; border-bottom: 1px solid #ddd; line-height: 20px; text-align: right; white-space: nowrap; }
td:nth-child(2), .cat td { text-align: left; }
tbody tr:nth-child(odd) td { background: #f9f9f9; }
tbody tr.cat td { background: #a9a9a9; }
.scrolltrack { width: 12px; height: 750px; padding: 3px 3px 0 2px; border-left: 1px solid #ccc; background: #edecea; }
.scrollthumb { height: 251px; width: 6px; border-radius: 3px; background: #cdcdcd; }
```
